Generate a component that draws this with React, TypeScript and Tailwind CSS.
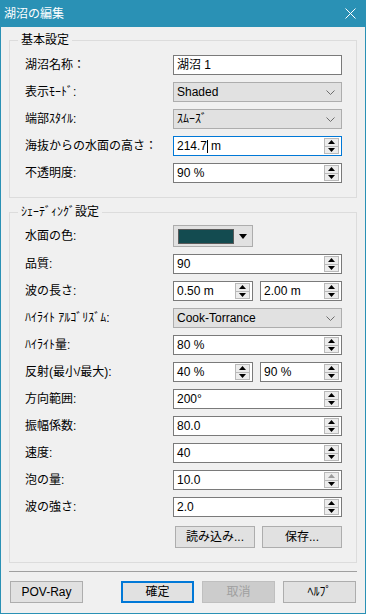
import { FC, ReactNode } from "react";

const font = "font-['Liberation_Sans','Noto_Sans_CJK_JP',sans-serif]";

const Spin: FC<{ upDim?: boolean }> = ({ upDim }) => (
  <div className="flex flex-col w-[15px] h-[16px] border border-[#b9b9b9] bg-[#ececec] shrink-0">
    <div className="flex-1 flex items-center justify-center border-b border-[#b9b9b9]">
      <svg width="7" height="4" viewBox="0 0 7 4">
        <polygon points="3.5,0 7,4 0,4" fill={upDim ? "#9a9a9a" : "#000"} />
      </svg>
    </div>
    <div className="flex-1 flex items-center justify-center">
      <svg width="7" height="4" viewBox="0 0 7 4">
        <polygon points="0,0 7,0 3.5,4" fill="#000" />
      </svg>
    </div>
  </div>
);

const Field: FC<{ children: ReactNode; focused?: boolean; upDim?: boolean }> = ({
  children,
  focused,
  upDim,
}) => (
  <div
    className={
      focused
        ? "h-5 flex items-center border border-[#0078d7] bg-white pl-[3px] pr-[2px]"
        : "h-5 flex items-center border border-[#7a7a7a] bg-white pl-[3px] pr-[2px]"
    }
  >
    <span className="flex-1 flex items-center whitespace-nowrap">{children}</span>
    <Spin upDim={upDim} />
  </div>
);

const Combo: FC<{ value: string }> = ({ value }) => (
  <div className="h-5 flex items-center border border-[#adadad] bg-[#e1e1e1] pl-[3px] pr-[6px]">
    <span className="flex-1">{value}</span>
    <svg width="9" height="5" viewBox="0 0 9 5">
      <polyline points="0.5,0.5 4.5,4.5 8.5,0.5" fill="none" stroke="#6d6d6d" strokeWidth="1" />
    </svg>
  </div>
);

const Row: FC<{ label: string; children: ReactNode; tall?: boolean }> = ({ label, children, tall }) => (
  <div className={tall ? "flex items-center h-[22px]" : "flex items-center h-5"}>
    <div className="w-[148px] whitespace-nowrap">{label}</div>
    <div className="flex-1">{children}</div>
  </div>
);

const Group: FC<{ title: string; children: ReactNode; topPad: string }> = ({ title, children, topPad }) => (
  <fieldset className={`border border-[#dcdcdc] pl-[15px] pr-[14px] pb-[14px] ${topPad}`}>
    <legend className="-ml-[7px] px-[3px] leading-[14px]">{title}</legend>
    <div className="flex flex-col gap-[7px]">{children}</div>
  </fieldset>
);

const Btn: FC<{ children: ReactNode; className?: string }> = ({ children, className }) => (
  <div
    className={`h-[22px] flex items-center justify-center border border-[#adadad] bg-[#e1e1e1] ${className ?? ""}`}
  >
    {children}
  </div>
);

export default function App() {
  return (
    <div className={`w-[366px] h-[614px] bg-[#f0f0f0] text-[12px] leading-[14px] text-black ${font} flex flex-col border-x border-b border-[#2a91b5]`}>
      {/* title bar */}
      <div className="h-[27px] bg-[#2a91b5] flex items-center justify-between pl-[4px] pr-[10px] -mx-px shrink-0">
        <span className="text-white text-[12px]">湖沼の編集</span>
        <svg width="11" height="11" viewBox="0 0 11 11">
          <path d="M0.5 0.5 L10.5 10.5 M10.5 0.5 L0.5 10.5" stroke="#fff" strokeWidth="1" />
        </svg>
      </div>

      <div className="flex flex-col px-[8px] pt-[6px]">
        <Group title="基本設定" topPad="pt-[8px]">
          <Row label="湖沼名称：">
            <div className="h-5 flex items-center border border-[#7a7a7a] bg-white pl-[3px]">湖沼 1</div>
          </Row>
          <Row label="表示ﾓｰﾄﾞ:">
            <Combo value="Shaded" />
          </Row>
          <Row label="端部ｽﾀｲﾙ:">
            <Combo value="ｽﾑｰｽﾞ" />
          </Row>
          <Row label="海抜からの水面の高さ：">
            <Field focused>
              214.7<span className="inline-block w-px h-[13px] bg-black mr-[3px]" />m
            </Field>
          </Row>
          <Row label="不透明度:">
            <Field>90 %</Field>
          </Row>
        </Group>

        <div className="h-[7px]" />

        <Group title="ｼｪｰﾃﾞｨﾝｸﾞ設定" topPad="pt-[6px]">
          <Row label="水面の色:" tall>
            <div className="w-[80px] h-[22px] flex items-center border border-[#adadad] bg-[#e1e1e1] pl-[4px]">
              <div className="w-[56px] h-[15px] border border-[#5a5a5a] bg-[#134b50]" />
              <svg width="8" height="5" viewBox="0 0 8 5" className="ml-[5px]">
                <polygon points="0,0 8,0 4,5" fill="#000" />
              </svg>
            </div>
          </Row>
          <Row label="品質:">
            <Field>90</Field>
          </Row>
          <Row label="波の長さ:">
            <div className="flex gap-[7px]">
              <div className="w-[80px]">
                <Field>0.50 m</Field>
              </div>
              <div className="flex-1">
                <Field>2.00 m</Field>
              </div>
            </div>
          </Row>
          <Row label="ﾊｲﾗｲﾄ ｱﾙｺﾞﾘｽﾞﾑ:">
            <Combo value="Cook-Torrance" />
          </Row>
          <Row label="ﾊｲﾗｲﾄ量:">
            <Field>80 %</Field>
          </Row>
          <Row label="反射(最小/最大):">
            <div className="flex gap-[7px]">
              <div className="w-[80px]">
                <Field>40 %</Field>
              </div>
              <div className="flex-1">
                <Field>90 %</Field>
              </div>
            </div>
          </Row>
          <Row label="方向範囲:">
            <Field>200°</Field>
          </Row>
          <Row label="振幅係数:">
            <Field>80.0</Field>
          </Row>
          <Row label="速度:">
            <Field>40</Field>
          </Row>
          <Row label="泡の量:">
            <Field upDim>10.0</Field>
          </Row>
          <Row label="波の強さ:">
            <Field>2.0</Field>
          </Row>
          <div className="flex justify-end gap-[7px] pt-[2px]">
            <Btn className="w-[80px]">読み込み...</Btn>
            <Btn className="w-[80px]">保存...</Btn>
          </div>
        </Group>

        <div className="mt-[8px] h-px bg-[#a0a0a0]" />
      </div>

      <div className="flex items-center px-[9px] pt-[9px]">
        <Btn className="w-[73px]">POV-Ray</Btn>
        <div className="ml-auto flex gap-[8px]">
          <div className="w-[73px] h-[22px] flex items-center justify-center border-2 border-[#0078d7] bg-[#e1e1e1]">
            確定
          </div>
          <div className="w-[73px] h-[22px] flex items-center justify-center border border-[#bfbfbf] bg-[#cccccc] text-[#a0a0a0]">
            取消
          </div>
          <Btn className="w-[73px]">ﾍﾙﾌﾟ</Btn>
        </div>
      </div>
    </div>
  );
}
